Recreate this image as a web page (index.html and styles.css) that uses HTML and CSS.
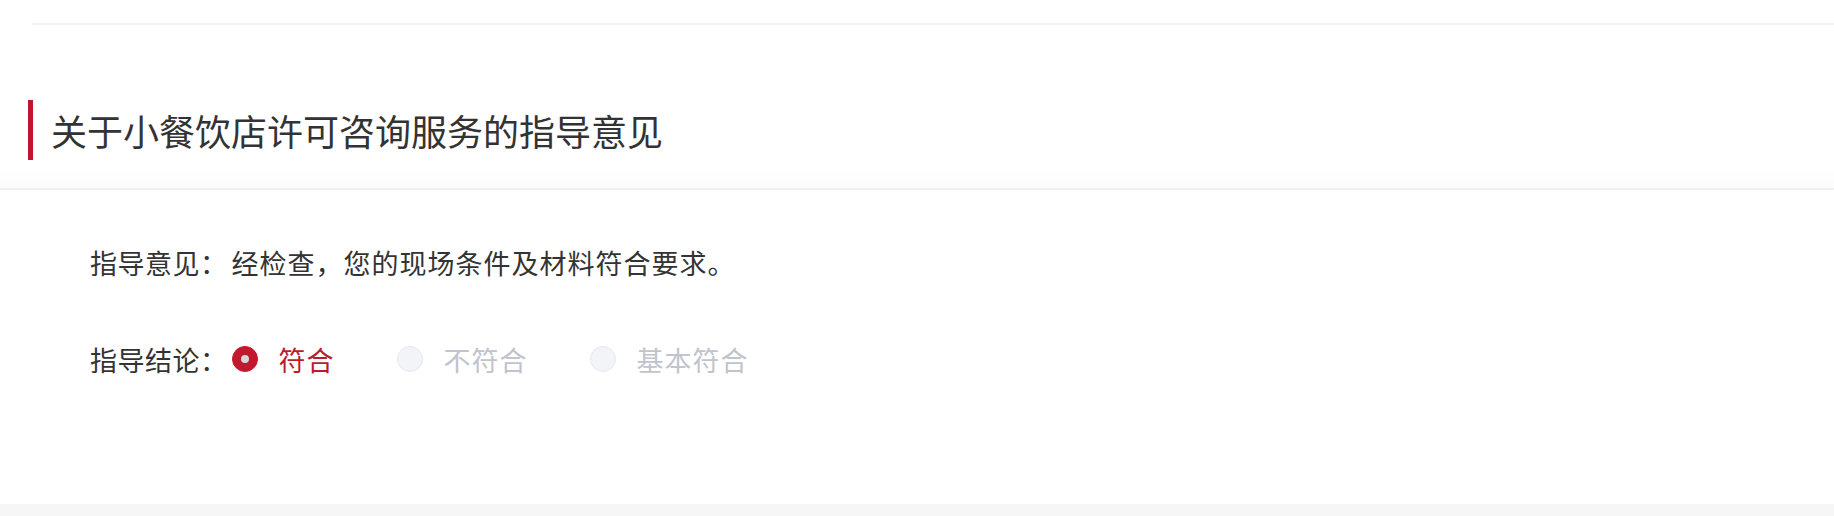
FILE: index.html
```html
<!DOCTYPE html>
<html lang="zh-CN">
<head>
    <meta charset="UTF-8">
    <meta name="viewport" content="width=device-width, initial-scale=1.0">
    <title>指导意见</title>
    <link rel="stylesheet" href="styles.css">
</head>
<body>
    <div class="page">
        <div class="prev-block"></div>
        <div class="section-head">
            <h2 class="section-title">关于小餐饮店许可咨询服务的指导意见</h2>
        </div>
        <div class="section-body">
            <div class="row">
                <span class="label">指导意见：</span>
                <span class="value">经检查，您的现场条件及材料符合要求。</span>
            </div>
            <div class="row">
                <span class="label">指导结论：</span>
                <label class="radio checked"><span class="radio-dot"></span><span class="radio-text">符合</span></label>
                <label class="radio disabled"><span class="radio-dot"></span><span class="radio-text">不符合</span></label>
                <label class="radio disabled"><span class="radio-dot"></span><span class="radio-text">基本符合</span></label>
            </div>
        </div>
    </div>
    <div class="footer-band"></div>
</body>
</html>
```

FILE: styles.css
```css
html, body{
    margin: 0;
    padding: 0;
    background: #fff;
}
body{
    font-family: "Noto Sans CJK SC", "Noto Sans", sans-serif;
    color: #333;
}
.page{
    height: 504px;
}
.prev-block{
    height: 23px;
    margin-left: 32px;
    border-bottom: 2px solid #f3f3f3;
}
.section-head{
    height: 165px;
    padding-top: 75px;
    box-sizing: border-box;
    border-bottom: 2px solid #f0f0f0;
    background: linear-gradient(to bottom, #fff 88%, #fbfbfb);
}
.section-title{
    margin: 0 0 0 28px;
    height: 60px;
    display: flex;
    align-items: center;
    padding-left: 18px;
    border-left: 5px solid #c0152f;
    font-size: 36px;
    font-weight: 400;
    color: #333;
}
.section-body{
    padding: 52px 0 0 90px;
}
.row{
    display: flex;
    align-items: center;
    height: 40px;
    font-size: 27px;
    letter-spacing: 0.5px;
    color: #333;
}
.row + .row{
    margin-top: 57px;
}
.value{
    letter-spacing: 1px;
}
.label{
    margin-right: 4px;
}
.radio{
    display: inline-flex;
    align-items: center;
    margin-right: 62px;
}
.radio-text{
    letter-spacing: 1px;
}
.radio-dot{
    position: relative;
    width: 26px;
    height: 26px;
    box-sizing: border-box;
    border-radius: 50%;
    margin-right: 21px;
}
.radio.checked .radio-dot{
    background: #c3192e;
    border: 1px solid #c3192e;
}
.radio.checked .radio-dot::after{
    content: "";
    position: absolute;
    left: 50%;
    top: 50%;
    width: 8px;
    height: 8px;
    margin: -4px 0 0 -4px;
    border-radius: 50%;
    background: #d8d8d8;
}
.radio.checked .radio-text{
    color: #b81c2e;
}
.radio.disabled .radio-dot{
    background: #f3f4f8;
    border: 1px solid #e6e8ee;
}
.radio.disabled .radio-text{
    color: #c0c4cc;
}
.footer-band{
    height: 12px;
    background: #f6f6f6;
}
```
